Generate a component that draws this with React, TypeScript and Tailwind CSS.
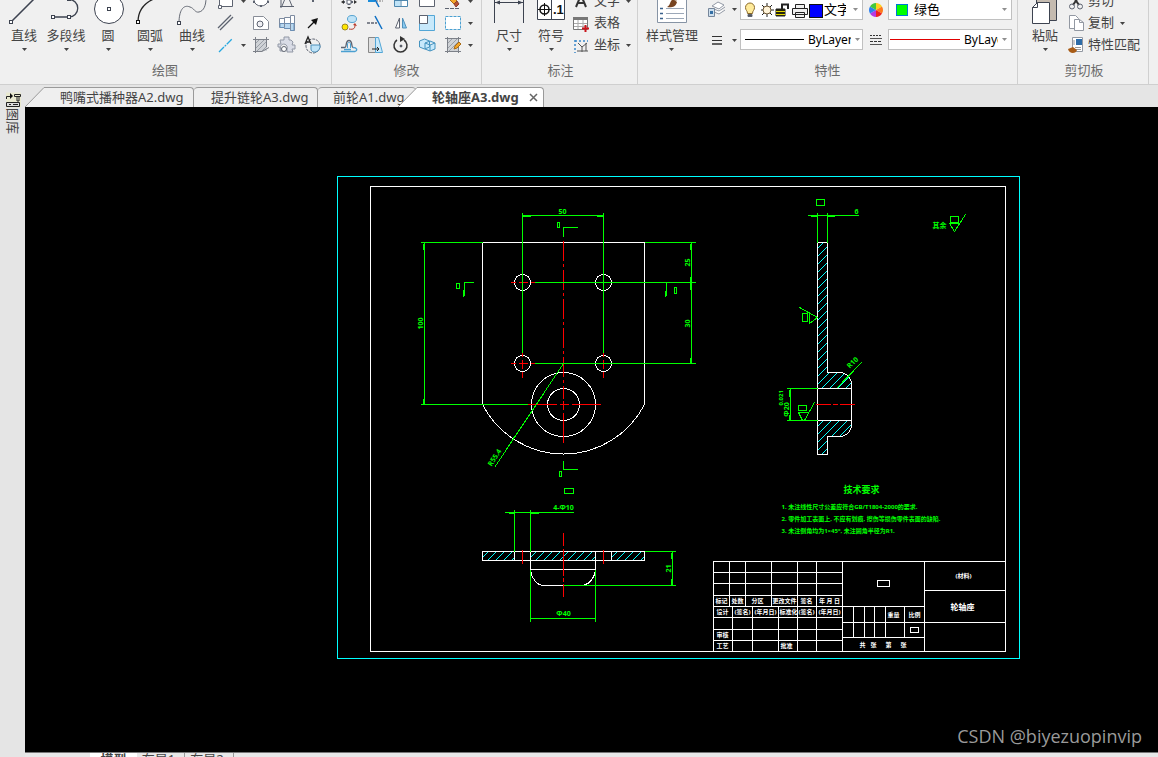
import { ReactNode } from "react";

interface IconProps {
  children: ReactNode;
}

interface ToolProps {
  name: string;
  children: ReactNode;
}

// 20x20 glyph used in the dense parts of the ribbon
function Glyph({ children }: IconProps) {
  return (
    <svg
      viewBox="0 0 20 20"
      className="h-5 w-5 shrink-0"
      fill="none"
      stroke="#5d6370"
      aria-hidden="true"
    >
      {children}
    </svg>
  );
}

function Caret() {
  return (
    <svg viewBox="0 0 5 3" className="h-[3px] w-[5px] shrink-0" aria-hidden="true">
      <path d="M0 0h5L2.500 3z" fill="#444" />
    </svg>
  );
}

function BigTool({ name, children }: ToolProps) {
  return (
    <button type="button" className="flex min-w-[42px] shrink-0 flex-col items-center">
      <svg
        viewBox="0 -6 42 32"
        className="h-8 w-[42px]"
        fill="none"
        stroke="#3d4350"
        aria-hidden="true"
      >
        {children}
      </svg>
      <span className="leading-5 whitespace-nowrap">{name}</span>
      <span className="flex h-[11px] items-start pt-[3px]">
        <Caret />
      </span>
    </button>
  );
}

function SmallTool({ name, children }: ToolProps) {
  return (
    <button
      type="button"
      aria-label={name}
      className="flex h-[22px] w-[26px] items-center justify-center"
    >
      <Glyph>{children}</Glyph>
    </button>
  );
}

function MoreButton({ name }: { name: string }) {
  return (
    <button
      type="button"
      aria-label={name}
      className="flex h-[22px] w-[9px] items-center justify-center"
    >
      <Caret />
    </button>
  );
}

function TextTool({ name, more, children }: ToolProps & { more?: boolean }) {
  return (
    <button type="button" className="flex h-[22px] items-center gap-[6px]">
      <span className="flex items-center gap-[2px]">
        <Glyph>{children}</Glyph>
        <span className="whitespace-nowrap">{name}</span>
      </span>
      {more && <Caret />}
    </button>
  );
}

function Group({
  title,
  className,
  children,
}: {
  title: string;
  className: string;
  children: ReactNode;
}) {
  return (
    <section className={`flex shrink-0 flex-col border-r border-[#d0d0d0] ${className}`}>
      <div className="flex h-[57px] items-end overflow-hidden">{children}</div>
      <h2 className="pr-1 text-center leading-7 text-[#6b6b6b]">{title}</h2>
    </section>
  );
}

function DrawGroup() {
  return (
    <Group title="绘图" className="w-[332px] pl-[3px]">
      <BigTool name="直线">
        <path d="M9 22 32-1" strokeWidth="1.500" />
        <rect x="6.500" y="21.500" width="3" height="3" fill="#fff" />
      </BigTool>
      <BigTool name="多段线">
        <path d="M8 18h16M24 .5a8.700 8.700 0 0 1 0 17.500" strokeWidth="1.300" />
        <rect x="6.500" y="16.500" width="3" height="3" fill="#fff" />
        <rect x="22.500" y="16.500" width="3" height="3" fill="#fff" />
        <rect x="22.500" y="-1.500" width="3" height="3" fill="#fff" />
      </BigTool>
      <BigTool name="圆">
        <circle cx="22" cy="10" r="14.500" fill="#fff" />
        <rect x="20.500" y="8.500" width="3" height="3" fill="#fff" />
      </BigTool>
      <BigTool name="圆弧">
        <path d="M9 23C9 12 14 4 27-1" strokeWidth="1.300" stroke="#222" />
        <rect x="7.500" y="21.500" width="3" height="3" fill="#fff" stroke="#111" />
      </BigTool>
      <BigTool name="曲线">
        <path d="M8 24C8 12 12 5 19 8c4 1 5 6 9 5 5-1 7-7 7-14" stroke="#666b75" />
        <rect x="6.500" y="22.500" width="3" height="3" fill="#fff" />
      </BigTool>
      <div>
        <SmallTool name="矩形">
          <path d="M3.500 2.500h13v13h-13z" fill="#fff" />
          <path d="M2.500 14.500h3v3h-3z" fill="#fff" />
        </SmallTool>
        <SmallTool name="平行线">
          <path d="M2 15 15 2M4 17 17 4" strokeWidth="1.300" />
        </SmallTool>
        <SmallTool name="中心线">
          <path d="M3 17 16 4" stroke="#27a8e0" strokeWidth="1.300" strokeDasharray="7 1 2 1" />
        </SmallTool>
      </div>
      <div>
        <MoreButton name="更多矩形" />
        <div className="h-[22px]" />
        <MoreButton name="更多中心线" />
      </div>
      <div className="grid grid-cols-3">
        <SmallTool name="椭圆">
          <ellipse cx="10" cy="9" rx="7" ry="6" fill="#fff" />
          <path d="M2 11h2M16 11h2M9 15h2" strokeWidth="2" />
        </SmallTool>
        <SmallTool name="多边形">
          <path d="M4 17V3M3 15.500h14M5 15l5-12 5 12" />
        </SmallTool>
        <SmallTool name="点">
          <path d="M9 10h2" strokeWidth="2" />
        </SmallTool>
        <SmallTool name="局部放大">
          <path d="M2.500 3.500h10l5 5v8h-15z" fill="#fff" stroke="#888d97" />
          <circle cx="9" cy="11" r="3" fill="#f0f0f4" />
        </SmallTool>
        <SmallTool name="轴">
          <path d="M2.500 5.500h5v-1h6v-2h4v15h-4v-2h-6v-1h-5z" fill="#fff" stroke="#7d8ba0" />
          <path d="M3 10.500h14v7h-3.500v-2h-6v-1H3z" fill="#b8d8f0" stroke="#6b8fb5" />
          <path d="M7.500 5v9M13.500 3v14" stroke="#7d8ba0" />
        </SmallTool>
        <SmallTool name="箭头">
          <path d="m5 15 6-6" stroke="#111" strokeWidth="1.300" />
          <path d="m15 5-2 7-5-5z" fill="#111" stroke="none" />
        </SmallTool>
        <SmallTool name="填充">
          <path d="M4 4h12v12H4z" fill="#cfd2d6" stroke="none" />
          <path d="M4 9l5-5M4 14 14 4M6 16 16 6M11 16l5-5" stroke="#9a9fa6" />
          <path d="M4.500 2v16M15.500 2v10M2 4.500h16M2 16.500h9l7-4" stroke="#7c8088" />
        </SmallTool>
        <SmallTool name="齿轮">
          <path
            d="M3 5h4V2h5v3h2l2 2-1 3h3v4h-3l1 3h-6v-3a3.500 3.500 0 1 0-4 2H3v-4H1V9h3z"
            fill="#d9dce6"
            stroke="#9298a5"
          />
          <circle cx="7" cy="14" r="2.500" fill="#fff" />
        </SmallTool>
        <SmallTool name="剖切">
          <circle cx="10" cy="11" r="7" strokeDasharray="3 1" />
          <path d="M8 10h9c1 8-9 9-9 4z" fill="#bfe3f7" stroke="#4f91bb" />
          <path d="m2 9 3-7 3 7M3 7h4" stroke="#222" strokeWidth="1.300" />
        </SmallTool>
      </div>
    </Group>
  );
}

function ModifyGroup() {
  return (
    <Group title="修改" className="w-[150px] pl-1">
      <div className="grid grid-cols-5">
        <SmallTool name="移动">
          <path d="M10 4v12M4 11h12" strokeDasharray="2 2" strokeWidth="2" />
          <path d="M8 9h4v4H8z" fill="#fff" />
          <path d="m10 18-2-2h4zM2 11l3-2v4zM18 11l-3-2v4z" fill="#333" stroke="none" />
        </SmallTool>
        <SmallTool name="修剪">
          <path d="M3 10h7" stroke="#1b8ddb" strokeWidth="2" />
          <path d="M11 10h7" stroke="#777" strokeDasharray="2 1" />
          <path d="m7 3 7 13" stroke="#0c6fc4" strokeWidth="1.500" />
        </SmallTool>
        <SmallTool name="阵列">
          <path d="M3.500 2.500h13v13h-13z" fill="#fff" stroke="#4e87ad" />
          <path d="M10 3h6v6h-6zM4 10h5v5H4z" fill="#bfe3f7" stroke="none" />
          <path d="M10 3v13M4 9.500h12" stroke="#4e87ad" />
        </SmallTool>
        <SmallTool name="拉伸">
          <path d="M2.500 2.500h15v13h-15z" fill="#fff" />
        </SmallTool>
        <SmallTool name="删除">
          <path d="m2 4 3-3 9 9-3 3z" fill="#f4a62a" stroke="#a96b15" />
          <path d="m11 13 3-3 2 3-3 3z" fill="#b75235" stroke="#8b4132" />
          <path d="M2 17.500h15" strokeDasharray="4 1" />
        </SmallTool>
        <SmallTool name="复制对象">
          <circle cx="6" cy="14" r="3" fill="#ffe600" stroke="#99852a" />
          <ellipse cx="13" cy="6" rx="4.500" ry="3.500" fill="#bfe3f7" stroke="#56a4d1" />
          <path d="M10 16c5 1 6-1 6-4" stroke="#b73b2c" />
          <path d="m14 12 2-2 2 3z" fill="#b73b2c" stroke="none" />
        </SmallTool>
        <SmallTool name="延伸">
          <path d="M2 10h10" strokeDasharray="3 1" strokeWidth="1.500" />
          <path d="m10 3 7 13" stroke="#0c6fc4" strokeWidth="1.500" />
        </SmallTool>
        <SmallTool name="镜像">
          <path d="M8.500 5v10h-4z" fill="#fff" />
          <path d="M11.500 5v10h4z" fill="#8bcaf0" stroke="#4f91bb" />
        </SmallTool>
        <SmallTool name="缩放">
          <path d="M2.500 2.500h15v15h-15z" fill="#c8e9fb" stroke="#53a6d6" />
          <path d="M2.500 2.500h8v8h-8z" fill="#fff" />
        </SmallTool>
        <SmallTool name="裁剪">
          <path d="M2.500 3.500h15v13h-15z" fill="#fff" stroke="#4ba0d1" strokeDasharray="3 1" />
        </SmallTool>
        <SmallTool name="偏移">
          <path d="M2 12.500h4c2 0 0-7 4-7s2 7 4 7" strokeWidth="1.300" />
          <path d="M2 16.500h14c3-1 2-4-2-4M5 14.500h7" stroke="#4ba0d1" strokeWidth="1.300" />
          <path d="M8.500 13V9c0-2 3-2 3 0v4" stroke="#4ba0d1" />
        </SmallTool>
        <SmallTool name="拔模">
          <path d="M3.500 2.500h7v15h-7z" fill="#e0e0e0" stroke="#888" />
          <path d="M10.500 2.500h3l4 15h-7z" fill="#c8e9fb" stroke="#53a6d6" />
          <path d="M7 14h7m-2-2 2 2-2 2" stroke="#222" />
        </SmallTool>
        <SmallTool name="旋转">
          <path d="M6 5a6.500 6.500 0 1 0 7 0" stroke="#333" strokeWidth="1.500" />
          <circle cx="10" cy="11" r="1" fill="#222" />
          <path d="m9 1 5 3-5 3z" fill="#333" stroke="none" />
        </SmallTool>
        <SmallTool name="三维">
          <path
            d="m2.500 6 5-2 5 2v6l-5 2-5-2zM8 8l5-2 5 2v6l-5 2-5-2zM8 8l5 2 5-2M13 10v6"
            fill="#c8e9fb"
            stroke="#4593bf"
          />
        </SmallTool>
        <SmallTool name="编辑填充">
          <path d="M4 4h12v12H4z" fill="#cfd2d6" stroke="none" />
          <path d="M4 9l5-5M4 14 14 4M6 16 16 6" stroke="#9a9fa6" />
          <path d="M4.500 2v16M15.500 2v16M2 3.500h16M2 16.500h16" stroke="#7c8088" />
          <path d="m11 14 1-3 4-4 2 2-4 4z" fill="#f4a62a" stroke="#a96b15" />
        </SmallTool>
      </div>
      <div>
        <MoreButton name="更多删除" />
        <MoreButton name="更多裁剪" />
        <MoreButton name="更多编辑" />
      </div>
    </Group>
  );
}

function AnnotateGroup() {
  return (
    <Group title="标注" className="w-[156px] pl-[6px]">
      <BigTool name="尺寸">
        <path d="M6.500-6v30M35.500-6v30M7 3.500h28" />
        <path d="m7 3.500 5-2v4zM35 3.500l-5-2v4z" fill="#3d4350" stroke="none" />
      </BigTool>
      <BigTool name="符号">
        <path d="M7.500-5.500h27v26h-27zM21.500-6v26" fill="#fff" />
        <circle cx="14.500" cy="10.500" r="4.500" stroke="#111" strokeWidth="1.500" />
        <path d="M8 10.500h13M14.500 4v13" stroke="#111" />
        <text
          x="23"
          y="15"
          fill="#111"
          stroke="none"
          className="font-['Liberation_Sans'] text-[13px] font-bold"
        >
          .1
        </text>
      </BigTool>
      <div className="flex flex-col items-start">
        <TextTool name="文字" more>
          <path d="M4 16 9 4l5 12M6 12h6" stroke="#333" strokeWidth="2" />
        </TextTool>
        <TextTool name="表格">
          <path d="M1.500 4.500h14v12h-14z" fill="#fff" stroke="#777" />
          <path d="M1 4h15v3H1z" fill="#777" stroke="none" />
          <path d="M2 10.500h13M2 13.500h13M6 7v9M11 7v9" stroke="#aaa" />
          <path d="M13.500 12v7M10 15.500h7" stroke="#c9141b" strokeWidth="2" />
        </TextTool>
        <TextTool name="坐标" more>
          <path d="m6 8 4 4 5-4M10 12v5M5 16h11M14 8v8" stroke="#555" />
          <path d="M3 5v13M3 6h13" stroke="#3b88c9" strokeDasharray="2 2" strokeWidth="1.500" />
        </TextTool>
      </div>
    </Group>
  );
}

function PropertiesGroup() {
  return (
    <Group title="特性" className="w-[380px] pl-1">
      <div className="flex w-[60px] shrink-0 justify-center">
        <BigTool name="样式管理">
          <path d="M6.500-5.500h29v29h-29z" fill="#fff" stroke="#8794a5" />
          <path
            d="M9 9.500h3M9 14.500h3M9 19.500h3"
            stroke="#39608c"
            strokeWidth="1.500"
          />
          <path d="M15 9.500h18M15 14.500h18M15 19.500h18" stroke="#9ca8b8" />
          <path d="m33-6-8 8-3-2 8-8z" fill="#a99076" stroke="none" />
          <path d="m22 0 4 3c-1 5-6 6-10 5 4-2 2-5 6-8z" fill="#774421" stroke="none" />
        </BigTool>
      </div>
      <div className="flex flex-col gap-[9px] pb-[5px]">
        <button type="button" aria-label="图层" className="flex h-[22px] w-[38px] items-center gap-[6px] pl-1">
          <Glyph>
            <path d="m6 7 6-4 6 3-5 4zM8 10l5 2 6-4M8 13l5 2 6-4" fill="#fff" stroke="#9299a5" />
            <path d="M2.500 9.500h6v8h-6z" fill="#cfe0ee" stroke="#76869a" />
            <path d="M4 12h3v3H4z" fill="#346fa5" stroke="none" />
          </Glyph>
          <Caret />
        </button>
        <button type="button" aria-label="线宽" className="flex h-[22px] w-[38px] items-center gap-[6px] pl-1">
          <Glyph>
            <path d="M6 6.500h10M6 10.500h10" stroke="#333" />
            <path d="M6 14h10" stroke="#333" strokeWidth="1.500" />
          </Glyph>
          <Caret />
        </button>
      </div>
      <div className="flex flex-col gap-[9px] pb-[6px]">
        <div className="flex h-[21px] w-[123px] items-center border border-[#c0c0c0] bg-white pr-1 text-black">
          <Glyph>
            <path
              d="M6.500 13.500c0-3-2-3-2-6a4.500 4.500 0 0 1 9 0c0 3-2 3-2 6z"
              fill="#ffeb9b"
              stroke="#8c6a2a"
            />
            <path d="M7 14.500h4v2H7z" fill="#555" />
          </Glyph>
          <svg viewBox="0 0 63 20" className="h-5 w-[63px] shrink-0" fill="none" stroke="#222" aria-hidden="true">
            <path d="M6 3v14M-1 10h14M1 5l10 10M11 5 1 15" />
            <circle cx="6" cy="10" r="4" fill="#fff3d8" stroke="#6d5733" />
            <path d="M15 9h9v7h-9z" fill="#26260a" />
            <path d="M21 9V4.500h6V9" strokeWidth="2" />
            <path d="M15 11.500h9M15 14.500h9" stroke="#e6d800" />
            <path d="M34.500 4.500h9v4h-9zM31.500 8.500h15v6h-15zM34.500 12.500h9v5h-9z" fill="#f0f0f0" />
            <rect x="48.500" y="4.500" width="13" height="13" fill="#00f" stroke="#111" />
          </svg>
          <select aria-label="图层名" className="h-[19px] w-[22px] appearance-none overflow-hidden bg-transparent">
            <option>文字</option>
          </select>
          <span className="ml-auto opacity-60">
            <Caret />
          </span>
        </div>
        <div className="flex h-[21px] w-[123px] items-center gap-1 border border-[#c0c0c0] bg-white px-1 text-black">
          <span className="h-px w-[59px] shrink-0 bg-black" />
          <select aria-label="线宽值" className="h-[19px] w-[43px] appearance-none bg-transparent text-[12px]">
            <option>ByLayer</option>
          </select>
          <span className="ml-auto opacity-60">
            <Caret />
          </span>
        </div>
      </div>
      <div className="flex w-[25px] flex-col items-center gap-[10px] pb-[6px]">
        <button type="button" aria-label="颜色">
          <Glyph>
            <g stroke="none">
              <path d="M10 10V3a7 7 0 0 1 6 3.500z" fill="#ffd21f" />
              <path d="m10 10 6-3.500a7 7 0 0 1 0 7z" fill="#ff7a1c" />
              <path d="m10 10 6 3.500a7 7 0 0 1-6 3.500z" fill="#ee2020" />
              <path d="M10 10v7a7 7 0 0 1-6-3.500z" fill="#b53be4" />
              <path d="m10 10-6 3.500a7 7 0 0 1 0-7z" fill="#2b7ff0" />
              <path d="M10 10 4 6.500A7 7 0 0 1 10 3z" fill="#42c83a" />
            </g>
          </Glyph>
        </button>
        <button type="button" aria-label="线型">
          <Glyph>
            <path d="M4 5.500h12" stroke="#333" strokeDasharray="2 1" />
            <path d="M4 8.500h12M4 14.500h12" stroke="#555" />
            <path d="M4 11.500h12" stroke="#333" strokeDasharray="3 1" />
          </Glyph>
        </button>
      </div>
      <div className="flex flex-col gap-[9px] pb-[6px]">
        <div className="flex h-[21px] w-[124px] items-center border border-[#c0c0c0] bg-white pr-1 pl-[7px] text-black">
          <span className="h-3 w-3 border border-[#0078d7] bg-[#00ff00]" />
          <select aria-label="颜色值" className="ml-[6px] h-[19px] w-[60px] appearance-none bg-transparent">
            <option>绿色</option>
          </select>
          <span className="ml-auto opacity-60">
            <Caret />
          </span>
        </div>
        <div className="flex h-[21px] w-[124px] items-center gap-1 border border-[#c0c0c0] bg-white pr-1 pl-px text-black">
          <span className="h-px w-[70px] shrink-0 bg-[#e00000]" />
          <select
            aria-label="线型值"
            className="h-[19px] w-[34px] appearance-none overflow-hidden bg-transparent text-[12px]"
          >
            <option>ByLayer</option>
          </select>
          <span className="ml-auto opacity-60">
            <Caret />
          </span>
        </div>
      </div>
    </Group>
  );
}

function ClipboardGroup() {
  return (
    <Group title="剪切板" className="w-[131px] pl-[6px]">
      <BigTool name="粘贴">
        <path d="M12.500-5.500h20v27h-20z" fill="#c5bbb0" />
        <path d="M13.500 3.500h12v21h-17v-16z" fill="#fff" />
        <path d="M13.500 3.500v5h-5z" fill="#fff" />
      </BigTool>
      <div className="flex flex-col items-start">
        <TextTool name="剪切">
          <path d="m6 4 7 10M14 4 7 14" stroke="#333" strokeWidth="2" />
          <circle cx="6" cy="15.500" r="2.500" />
          <circle cx="14" cy="15.500" r="2.500" />
        </TextTool>
        <TextTool name="复制" more>
          <path d="M3.500 2.500h6l3 3v10h-9z" fill="#fff" stroke="#9298a2" />
          <path d="M8.500 6.500h5l4 3v8h-9z" fill="#fff" stroke="#9298a2" />
          <path d="M13.500 6.500v3h4" stroke="#9298a2" />
        </TextTool>
        <TextTool name="特性匹配">
          <path d="M6.500 2.500h10v14h-10z" fill="#fff" stroke="#9298a2" />
          <path d="M10 4h6v6h-6z" fill="#2d6ca8" stroke="none" />
          <path d="M9 12.500h6M9 14.500h6M8 5v5" stroke="#999" />
          <path d="m2 14 5-2 4 3c-1 4-8 4-9-1z" fill="#a85c17" stroke="none" />
        </TextTool>
      </div>
    </Group>
  );
}

interface HatchProps {
  id: string;
  outline: string;
  box: [number, number, number, number];
}

// Section hatching at 45 degrees, clipped to the outline
function Hatch({ id, outline, box }: HatchProps) {
  const [x1, y1, x2, y2] = box;
  const lines: string[] = [];
  for (let sum = x1 + y1 + 6; sum < x2 + y2; sum += 8) {
    lines.push(`M${sum - y2} ${y2}L${sum - y1} ${y1}`);
  }
  return (
    <>
      <clipPath id={id}>
        <path d={outline} />
      </clipPath>
      <path d={lines.join("")} clipPath={`url(#${id})`} stroke="#00ffff" />
    </>
  );
}

interface NoteProps {
  x: number;
  y: number;
  angle?: number;
  children: ReactNode;
}

// Dimension value centred on a point
function Note({ x, y, angle = 0, children }: NoteProps) {
  return (
    <text
      x={x}
      y={y}
      textAnchor="middle"
      dominantBaseline="central"
      transform={`rotate(${angle} ${x} ${y})`}
      className="text-[7px] font-bold"
    >
      {children}
    </text>
  );
}

const TITLE_CELLS: [number, number, string][] = [
  [721, 600, "标记"],
  [737, 600, "处数"],
  [757, 600, "分区"],
  [784, 600, "更改文件"],
  [806, 600, "签名"],
  [829, 600, "年 月 日"],
  [722, 611, "设计"],
  [742, 611, "(签名)"],
  [765, 611, "(年月日)"],
  [788, 611, "标准化"],
  [806, 611, "(签名)"],
  [829, 611, "(年月日)"],
  [722, 634, "审核"],
  [722, 645, "工艺"],
  [786, 645, "批准"],
  [893, 614, "重量"],
  [914, 614, "比例"],
  [862, 644, "共"],
  [873, 644, "张"],
  [888, 644, "第"],
  [903, 644, "张"],
  [963, 575, "(材料)"],
];

function FrontView() {
  return (
    <>
      <g stroke="#fff">
        <path d="M482 404V242H644V404A91 91 0 0 1 482 404" />
        <circle cx="522" cy="282" r="8" />
        <circle cx="603" cy="282" r="8" />
        <circle cx="522" cy="363" r="8" />
        <circle cx="603" cy="363" r="8" />
        <circle cx="563" cy="404" r="32" />
        <circle cx="563" cy="404" r="16" />
      </g>
      <g stroke="#f00">
        <path d="M563 240V398" strokeDasharray="20 3 3 3" />
        <path d="M563 400v9M563 412v30M527 404h29M559 404h9M571 404h29" />
        <path d="M510 282h5M518 282h9M530 282h4M510 363h5M518 363h9M530 363h4" />
        <path d="M522 352v4M522 359v9M522 371v6M603 352v4M603 359v9M603 371v6" />
      </g>
      <g stroke="#0f0">
        <path d="M522 212V352M603 212V352M522 215H603M522 216h8M596 216h7" />
        <path d="M420 242H482M420 404H527M424 242V404M423 243v6M423 398v6" />
        <path d="M644 242H695M534 282H695M534 363H695M691 242V363M690 243v6M690 276v13M690 357v6" />
        <path d="M563 236v-9h14M464 295v-13h9M463 289v7M666 282v13M665 290v6M563 460v9h14" />
        <path d="M557 222h2v5h-2zM456 283h3v5h-3zM674 287h2v6h-2zM559 471h2v5h-2z" />
        <path d="M563 363 494 467M516 434l-4 5" />
      </g>
      <g fill="#0f0" stroke="none">
        <Note x={562} y={211}>50</Note>
        <Note x={420} y={323} angle={-90}>100</Note>
        <Note x={687} y={262} angle={-90}>25</Note>
        <Note x={687} y={323} angle={-90}>30</Note>
        <Note x={494} y={457} angle={-57}>R55.4</Note>
      </g>
    </>
  );
}

function BottomView() {
  return (
    <>
      <Hatch id="plate-left" outline="M482 551h32v9h-32z" box={[482, 551, 514, 560]} />
      <Hatch id="plate-mid" outline="M530 551h65v9h-65z" box={[530, 551, 595, 560]} />
      <Hatch id="plate-right" outline="M611 551h33v9h-33z" box={[611, 551, 644, 560]} />
      <g stroke="#fff">
        <path d="M482 551H644V560H482zM514 551v9M530 551v18M595 551v18M611 551v9M530 569H595" />
        <path d="M530 569C531 578 537 585 543 585H583C589 583 594 578 595 569" />
      </g>
      <path
        d="M563 532v13M563 548v27M563 577v4M563 583v13M522 549v14M603 549v14"
        stroke="#f00"
      />
      <g stroke="#0f0">
        <path d="M564 488h9v5h-9zM504 512H573M514 509V551M530 509V551M508 513h6M530 513h8" />
        <path d="M530 569V621M595 569V621M530 618H595M644 551H675M563 585H675" />
        <path d="M672 551V585M671 552v6M671 578v7" />
      </g>
      <g fill="#0f0" stroke="none">
        <Note x={563} y={507}>4-Φ10</Note>
        <Note x={563} y={613}>Φ40</Note>
        <Note x={668} y={568} angle={-90}>21</Note>
      </g>
    </>
  );
}

function SideView() {
  return (
    <>
      <Hatch
        id="side-top"
        outline="M817 242h10V372H840A12 12 0 0 1 851 384V388H817z"
        box={[817, 242, 851, 388]}
      />
      <Hatch
        id="side-bottom"
        outline="M817 420H851V424A12 12 0 0 1 840 436H827V454H817z"
        box={[817, 420, 851, 454]}
      />
      <path
        d="M817 242h10V372H839A12 12 0 0 1 851 384V424A12 12 0 0 1 839 436H827V454H817zM817 388H851M817 420H851"
        stroke="#fff"
      />
      <path d="M815 404h15M832 404h5M839 404h15" stroke="#f00" />
      <g stroke="#0f0">
        <path d="M816 199h8v6h-8zM807 215H858M817 212V242M827 212V242M810 216h7M827 216h7" />
        <path d="M836 388 861 362M842 381l4-4" />
        <path d="M786 388H817M786 420H817M790 388V420M789 389v7M789 414v6" />
        <path d="M798 405h8v5h-8zM798 412h9M798 412l4 8h2L814 402" />
        <path d="M802 313h5v8h-5zM799 307l18 10-8 6V312" />
        <path d="M950 216h8v6h-8zM949 223h10M949 223l5 8L965 214" />
      </g>
      <g fill="#0f0" stroke="none">
        <Note x={856} y={211}>6</Note>
        <Note x={852} y={362} angle={-45}>R10</Note>
        <Note x={786} y={409} angle={-90}>Φ20</Note>
        <text
          x="780"
          y="405"
          transform="rotate(-90 780 405)"
          dominantBaseline="central"
          className="text-[6px] font-bold"
        >
          0.021
        </text>
        <Note x={939} y={225}>其余</Note>
      </g>
    </>
  );
}

function TitleBlock() {
  return (
    <>
      <g stroke="#fff">
        <path d="M713 651V561H1005M842 561V651M924 561V651" />
        <path d="M713 572H842M713 583H842M713 595H842M713 606H924M713 617H842M713 629H842M713 640H842" />
        <path d="M729 561v45M745 561v45M771 561v45M797 561v90M816 561v90M732 606v45M752 606v45M778 606v45" />
        <path d="M842 622H1005M842 637H924M924 590H1005" />
        <path d="M853 606v31M864 606v31M874 606v31M885 606v31M904 606v31" />
        <path d="M877 580h12v6h-12zM910 627h8v5h-8z" />
      </g>
      <g fill="#fff" stroke="none" textAnchor="middle" className="text-[6px] font-bold">
        {TITLE_CELLS.map(([x, y, label]) => (
          <text key={`${x}-${y}`} x={x} y={y} dominantBaseline="central">
            {label}
          </text>
        ))}
        <text x="962" y="606" dominantBaseline="central" className="text-[8px]">
          轮轴座
        </text>
      </g>
    </>
  );
}

function Drawing() {
  return (
    <svg
      viewBox="24.500 106.500 1133 645"
      className="h-full w-full"
      fill="none"
      shapeRendering="crispEdges"
      role="img"
      aria-label="轮轴座A3"
    >
      <rect x="337" y="176" width="682" height="482" stroke="#00ffff" />
      <rect x="370" y="186" width="635" height="465" stroke="#fff" />
      <FrontView />
      <BottomView />
      <SideView />
      <g fill="#0f0" className="text-[6px] font-bold">
        <text x="843" y="492" className="text-[9px]">
          技术要求
        </text>
        <text x="781" y="508">1. 未注线性尺寸公差应符合GB/T1804-2000的要求.</text>
        <text x="781" y="520">2. 零件加工表面上, 不应有划痕, 擦伤等损伤零件表面的缺陷.</text>
        <text x="781" y="532">3. 未注倒角均为1×45°, 未注圆角半径为R1.</text>
      </g>
      <TitleBlock />
    </svg>
  );
}

function FileTabs() {
  return (
    <nav className="flex h-[22px] shrink-0 items-end text-[#444]">
      <svg viewBox="0 0 20 20" className="h-5 w-5 shrink-0" aria-hidden="true">
        <path d="M0 20 19 1h1v19z" fill="#efefef" />
        <path d="M0 20 19 .5h1" fill="none" stroke="#9a9a9a" />
      </svg>
      <button
        type="button"
        className="h-5 w-[149px] shrink-0 rounded-tr-sm border-t border-r border-[#9a9a9a] bg-[#efefef] pl-[15px] text-left whitespace-nowrap"
      >
        鸭嘴式播种器A2.dwg
      </button>
      <button
        type="button"
        className="h-5 w-[124px] shrink-0 rounded-t-sm border-t border-r border-[#9a9a9a] bg-[#efefef] pl-[17px] text-left whitespace-nowrap"
      >
        提升链轮A3.dwg
      </button>
      <button
        type="button"
        className="h-5 w-[98px] shrink-0 rounded-t-sm border-t border-[#9a9a9a] bg-[#efefef] pl-[15px] text-left whitespace-nowrap"
      >
        前轮A1.dwg
      </button>
      <svg viewBox="0 0 20 20" className="-ml-[18px] h-5 w-5 shrink-0" aria-hidden="true">
        <path d="M0 20 19 1h1v19z" fill="#fff" />
        <path d="M0 20 19 .5h1" fill="none" stroke="#9a9a9a" />
      </svg>
      <div className="flex h-5 w-[126px] shrink-0 items-center rounded-tr-sm border-t border-r border-[#9a9a9a] bg-white pl-[14px]">
        <button type="button" className="font-bold whitespace-nowrap">
          轮轴座A3.dwg
        </button>
        <button type="button" aria-label="关闭" className="mr-[5px] ml-auto">
          <svg viewBox="0 0 9 9" className="h-[9px] w-[9px]" aria-hidden="true">
            <path d="m1 1 7 7M8 1 1 8" stroke="#666" strokeWidth="1.500" />
          </svg>
        </button>
      </div>
    </nav>
  );
}

function LayoutTabs() {
  return (
    <nav className="flex h-[5px] shrink-0 items-start overflow-hidden border-t border-[#777] bg-[#e8e8e8] pl-[65px] text-[#444]">
      <button type="button" className="w-[47px] bg-white leading-3 font-bold">
        模型
      </button>
      <button type="button" className="w-12 border-r border-[#999] pr-1 leading-3">
        布局1
      </button>
      <button type="button" className="w-[49px] border-r border-[#999] pr-1 leading-3">
        布局2
      </button>
    </nav>
  );
}

export default function App() {
  return (
    <div className="flex h-screen flex-col overflow-hidden bg-[#e5e5e5] font-['Noto_Sans','Noto_Sans_CJK_SC',sans-serif] text-[13px] text-[#444]">
      <header className="flex h-[85px] shrink-0 overflow-hidden border-b border-[#cfcfcf] bg-[#f0f0f0]">
        <DrawGroup />
        <ModifyGroup />
        <AnnotateGroup />
        <PropertiesGroup />
        <ClipboardGroup />
      </header>

      <div className="flex min-h-0 flex-1">
        <aside className="flex w-[25px] shrink-0 flex-col pt-[7px]">
          <button type="button" className="flex flex-col items-center">
            <svg
              viewBox="0 0 16 16"
              className="h-4 w-4"
              fill="none"
              stroke="#222"
              aria-hidden="true"
            >
              <path d="M1 .5h15v15H1z" fill="#e9e9d0" stroke="none" />
              <path d="M1.500 7V4.500h4M9.500 2.500h6v2h-6zM12 5v4h2V5" />
              <path d="M5 1v6l3-3z" fill="#111" stroke="none" />
              <path d="M1.500 10.500h13v4h-13zM4 12.500h2M8 12.500h5" fill="#ddd" />
            </svg>
            <span className="text-[13px] leading-4 [text-orientation:sideways] [writing-mode:vertical-rl]">
              图库
            </span>
          </button>
        </aside>

        <div className="flex min-w-0 flex-1 flex-col">
          <FileTabs />
          <main className="relative min-h-0 flex-1 bg-black">
            <Drawing />
            <p className="absolute right-4 bottom-1 font-['Open_Sans',sans-serif] text-[18px] leading-6 text-[#9a9a9a]">
              CSDN @biyezuopinvip
            </p>
          </main>
          <LayoutTabs />
        </div>
      </div>
    </div>
  );
}
